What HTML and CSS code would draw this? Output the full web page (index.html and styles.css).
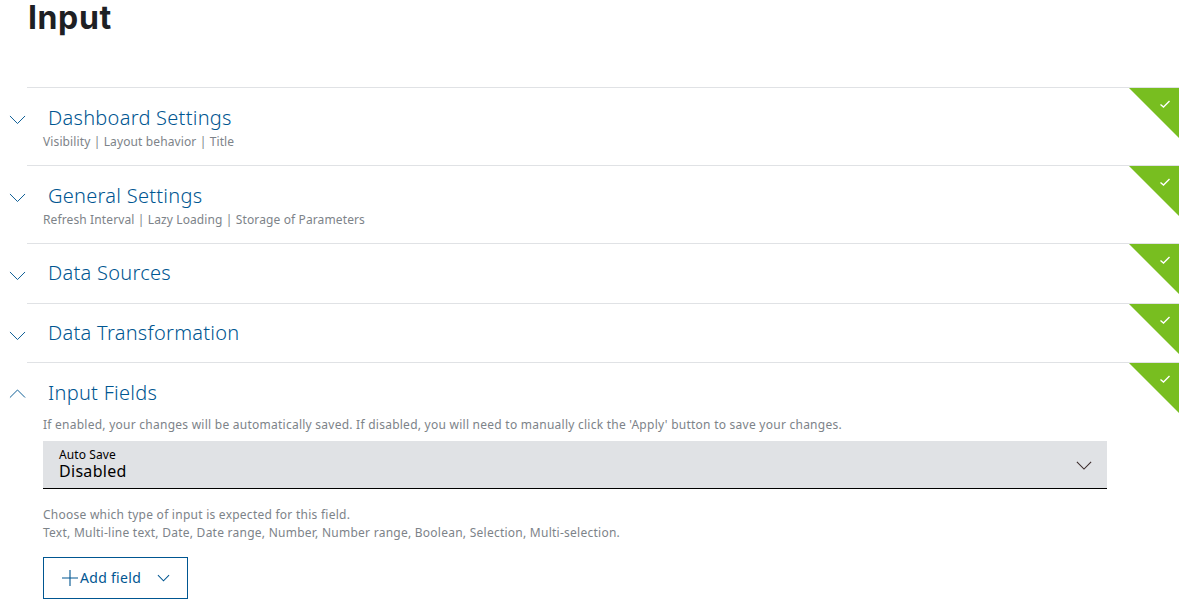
FILE: index.html
```html
<!DOCTYPE html>
<html lang="en">
<head>
<meta charset="utf-8">
<title>Input</title>
<link rel="stylesheet" href="styles.css">
</head>
<body>
<main class="page">
  <h1 class="page-title">Input</h1>
  <section class="section section-sub">
    <div class="gutter"><svg class="chev" viewBox="0 0 18 10"><path d="M1 1l8 8 8-8"/></svg></div>
    <div class="body">
      <h2 class="title">Dashboard Settings</h2>
      <p class="sub">Visibility | Layout behavior | Title</p>
      <div class="flag"><svg viewBox="0 0 12 10"><path d="M1.5 5.5l3 2.5 6-6"/></svg></div>
    </div>
  </section>
  <section class="section section-sub">
    <div class="gutter"><svg class="chev" viewBox="0 0 18 10"><path d="M1 1l8 8 8-8"/></svg></div>
    <div class="body">
      <h2 class="title">General Settings</h2>
      <p class="sub">Refresh Interval | Lazy Loading | Storage of Parameters</p>
      <div class="flag"><svg viewBox="0 0 12 10"><path d="M1.5 5.5l3 2.5 6-6"/></svg></div>
    </div>
  </section>
  <section class="section section-plain">
    <div class="gutter"><svg class="chev" viewBox="0 0 18 10"><path d="M1 1l8 8 8-8"/></svg></div>
    <div class="body">
      <h2 class="title">Data Sources</h2>
      <div class="flag"><svg viewBox="0 0 12 10"><path d="M1.5 5.5l3 2.5 6-6"/></svg></div>
    </div>
  </section>
  <section class="section section-plain">
    <div class="gutter"><svg class="chev" viewBox="0 0 18 10"><path d="M1 1l8 8 8-8"/></svg></div>
    <div class="body">
      <h2 class="title">Data Transformation</h2>
      <div class="flag"><svg viewBox="0 0 12 10"><path d="M1.5 5.5l3 2.5 6-6"/></svg></div>
    </div>
  </section>
  <section class="section section-open">
    <div class="gutter"><svg class="chev" viewBox="0 0 18 10"><path d="M1 9l8-8 8 8"/></svg></div>
    <div class="body">
      <h2 class="title">Input Fields</h2>
      <div class="flag"><svg viewBox="0 0 12 10"><path d="M1.5 5.5l3 2.5 6-6"/></svg></div>
      <div class="content">
        <p class="sub">If enabled, your changes will be automatically saved. If disabled, you will need to manually click the 'Apply' button to save your changes.</p>
        <div class="select">
          <div class="select-text">
            <span class="select-label">Auto Save</span>
            <span class="select-value">Disabled</span>
          </div>
          <svg class="select-chev" viewBox="0 0 18 10"><path d="M1 1l8 8 8-8"/></svg>
        </div>
        <p class="sub help">Choose which type of input is expected for this field.<br>Text, Multi-line text, Date, Date range, Number, Number range, Boolean, Selection, Multi-selection.</p>
        <button class="add" type="button">
          <svg class="plus" viewBox="0 0 16 16"><path d="M8 0v16M0 8h16"/></svg>
          <span class="add-label">Add field</span>
          <svg class="add-chev" viewBox="0 0 14 8"><path d="M1 1l6 6 6-6"/></svg>
        </button>
      </div>
    </div>
  </section>
</main>
</body>
</html>
```
FILE: styles.css
```css
* { box-sizing: border-box; }
html, body { margin: 0; height: 100%; overflow: hidden; background: #fff; }
body { font-family: "Noto Sans", "Open Sans", sans-serif; color: #1c1d20; }
.page { width: 1179px; }
.page-title { margin: 0; height: 87px; padding-left: 28px; font-size: 32px; line-height: 36px; font-weight: 700; letter-spacing: .6px; font-family: "Inter", "Noto Sans", sans-serif; color: #1e2024; }
.section { display: flex; }
.section-sub { height: 78px; }
.section-plain { height: 60px; }
.section-plain + .section-plain { height: 59px; }
.gutter { width: 27px; flex: none; padding: 28px 0 0 9px; }
.section-open .gutter { padding-top: 27px; }
.chev { display: block; width: 17px; height: 9.5px; fill: none; stroke: #005691; stroke-width: 1; }
.body { position: relative; flex: 1; border-top: 1px solid #e0e2e5; padding-top: 16px; }
.section-plain .body { padding-top: 15px; }
.title { margin: 0; padding-left: 21px; font-size: 20px; line-height: 28px; font-weight: 300; color: #005691; letter-spacing: .27px; }
.sub { margin: 0; padding-left: 16px; font-size: 12px; line-height: 18px; color: #7d8389; letter-spacing: .25px; }
.section-sub .sub { margin-top: 1px; letter-spacing: .12px; }
.flag { position: absolute; top: 0; right: 0; width: 50px; height: 50px; background: #78be20; clip-path: polygon(0 0, 100% 0, 100% 100%); }
.flag svg { position: absolute; top: 11px; right: 8px; width: 12px; height: 10px; fill: none; stroke: #fff; stroke-width: 1.4; }
.content { padding-top: 9px; }
.select { display: flex; align-items: center; justify-content: space-between; margin: 7px 72px 0 16px; height: 48px; padding: 0 15px 0 16px; background: #e0e2e5; border-bottom: 1px solid #000; }
.select-text { display: flex; flex-direction: column; }
.select-label { font-size: 12px; line-height: 14px; color: #000; letter-spacing: .1px; }
.select-value { font-size: 16px; line-height: 19px; color: #000; letter-spacing: .3px; }
.select-chev { width: 16px; height: 9px; margin-top: 1px; fill: none; stroke: #3a2a2a; stroke-width: 1.2; }
.help { margin-top: 17px; }
.add { display: flex; align-items: center; margin: 15px 0 0 16px; width: 145px; height: 42px; padding: 0 0 0 18px; background: #fff; border: 1px solid #005691; border-radius: 0; font: 14px/20px "Noto Sans", sans-serif; color: #005691; }
.add-label { margin-left: 2px; letter-spacing: .3px; }
.plus { width: 16px; height: 16px; fill: none; stroke: #005691; stroke-width: 1.1; }
.add-chev { width: 13px; height: 8px; margin-left: 16px; fill: none; stroke: #005691; stroke-width: 1.1; }
```
